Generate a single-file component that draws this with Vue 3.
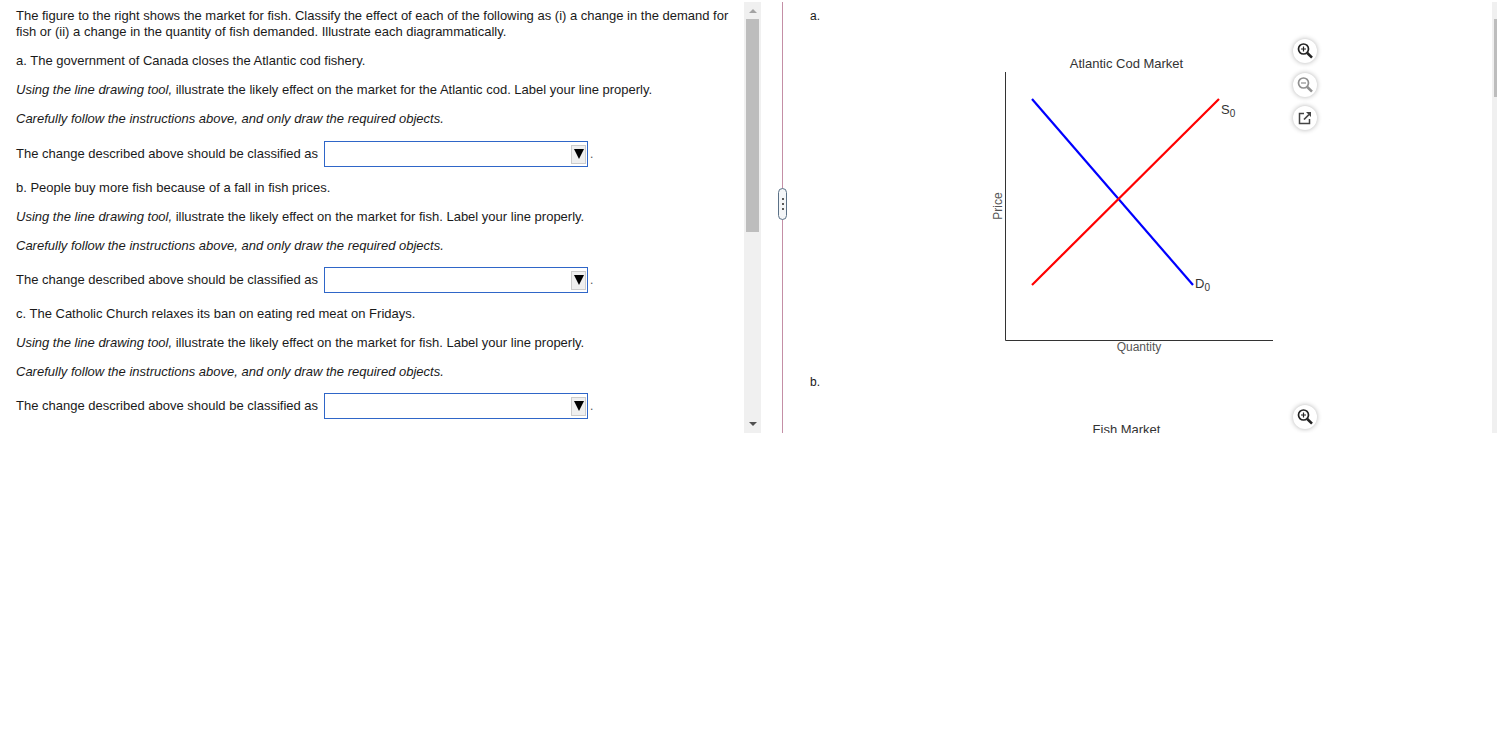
<template>
  <div class="player">
    <section class="questions">
      <div class="questions__body">
        <p class="intro">
          The figure to the right shows the market for fish. Classify the effect of each of the following as (i) a change in the demand for<br />
          fish or (ii) a change in the quantity of fish demanded. Illustrate each diagrammatically.
        </p>
        <div v-for="q in questions" :key="q.text" class="question">
          <p>{{ q.text }}</p>
          <p><em>Using the line drawing tool,</em> illustrate the likely effect on the market for {{ q.market }}. Label your line properly.</p>
          <p><em>Carefully follow the instructions above, and only draw the required objects.</em></p>
          <div class="answer">
            <span>The change described above should be classified as</span>
            <div class="dropdown">
              <span class="dropdown__btn"><i></i></span>
            </div>
            <span class="answer__dot">.</span>
          </div>
        </div>
      </div>
      <div class="scrollbar">
        <span class="arrow arrow--up"></span>
        <span class="scrollbar__thumb"></span>
        <span class="scrollbar__gap"></span>
        <span class="arrow arrow--down"></span>
      </div>
    </section>

    <div class="divider">
      <span class="divider__handle"><i></i><i></i><i></i></span>
    </div>

    <section class="figures">
      <div class="figures__body">
        <div v-for="chart in charts" :key="chart.label" class="figure">
          <div class="figure__label">{{ chart.label }}</div>
          <svg class="graph" width="300" height="366" viewBox="0 0 300 366">
            <text x="136.500" y="66" text-anchor="middle" class="graph__title">{{ chart.title }}</text>
            <template v-if="chart.lines">
              <path d="M15.5 70V338.500H283" fill="none" stroke="#333" stroke-width="1" />
              <text x="149" y="349" text-anchor="middle" class="graph__axis">Quantity</text>
              <text transform="translate(12 204) rotate(-90)" text-anchor="middle" class="graph__axis">Price</text>
              <line x1="42" y1="97" x2="203" y2="283" stroke="#0000ff" stroke-width="2.2" />
              <line x1="42" y1="283" x2="229" y2="97" stroke="#ff0000" stroke-width="2.2" />
              <text x="231" y="112" class="graph__curve">S<tspan class="graph__sub" dy="3">0</tspan></text>
              <text x="205" y="286" class="graph__curve">D<tspan class="graph__sub" dy="3">0</tspan></text>
            </template>
          </svg>
          <div class="tools">
            <button class="tool">
              <svg width="20" height="20" viewBox="0 0 20 20" fill="none" stroke="#222">
                <circle cx="8.500" cy="8" r="5" stroke-width="1.700" />
                <path d="M12.300 12L17 16.700" stroke-width="2.600" />
                <path d="M6 8h5M8.500 5.500v5" stroke-width="1.200" />
              </svg>
            </button>
            <button v-if="chart.lines" class="tool">
              <svg width="20" height="20" viewBox="0 0 20 20" fill="none" stroke="#8f8f8f">
                <circle cx="8.500" cy="8" r="5" stroke-width="1.700" />
                <path d="M12.300 12L17 16.700" stroke-width="2.600" />
                <path d="M6 8h5" stroke-width="1.200" />
              </svg>
            </button>
            <button v-if="chart.lines" class="tool">
              <svg width="20" height="20" viewBox="0 0 20 20" fill="none" stroke="#444">
                <path d="M9 5.500H4.500V15.500H14.500V11" stroke-width="1.500" />
                <path d="M9 11.500L14 6.500" stroke-width="1.700" />
                <path d="M11 4h5v5z" fill="#444" stroke="none" />
              </svg>
            </button>
          </div>
        </div>
      </div>
      <div class="page-scroll"><span></span></div>
    </section>
  </div>
</template>

<script setup>
const questions = [
  { text: 'a. The government of Canada closes the Atlantic cod fishery.', market: 'the Atlantic cod' },
  { text: 'b. People buy more fish because of a fall in fish prices.', market: 'fish' },
  { text: 'c. The Catholic Church relaxes its ban on eating red meat on Fridays.', market: 'fish' }
]

const charts = [
  { label: 'a.', title: 'Atlantic Cod Market', lines: true },
  { label: 'b.', title: 'Fish Market', lines: false }
]
</script>

<style>
html,
body {
  background: #fff;
}
</style>

<style scoped>
.player {
  display: flex;
  height: 431px;
  margin-top: 2px;
  overflow: hidden;
  font-family: 'Liberation Sans', Arial, sans-serif;
  font-size: 13px;
  line-height: 16px;
  color: #1a1a1a;
}

p {
  margin: 0 0 13px;
}

.questions {
  display: flex;
  flex: 0 0 761px;
}

.questions__body {
  width: 744px;
  padding: 6px 0 0 16px;
  box-sizing: border-box;
  overflow: hidden;
}

.intro {
  white-space: nowrap;
}

.question p + p + p {
  margin-bottom: 0;
}

.answer {
  display: flex;
  align-items: center;
  height: 26px;
  margin: 14px 0 13px;
}

.question + .question .answer {
  margin-top: 13px;
}

.dropdown {
  display: flex;
  align-items: center;
  justify-content: flex-end;
  width: 264px;
  height: 26px;
  margin-left: 6px;
  padding-right: 1px;
  box-sizing: border-box;
  background: #fff;
  border: 1px solid #2f66c8;
}

.dropdown__btn {
  display: flex;
  align-items: center;
  justify-content: center;
  width: 15px;
  height: 19px;
  background: #efefef;
  border: 1px solid #ccc;
  box-sizing: border-box;
}

.dropdown__btn i {
  border-left: 5px solid transparent;
  border-right: 5px solid transparent;
  border-top: 10px solid #000;
}

.answer__dot {
  margin-left: 2px;
  font-size: 12px;
  color: #555;
  line-height: 26px;
}

.scrollbar {
  display: flex;
  flex-direction: column;
  align-items: center;
  width: 17px;
  background: #f0f0f0;
}

.arrow {
  flex: none;
  width: 0;
  height: 0;
  border-left: 4px solid transparent;
  border-right: 4px solid transparent;
}

.arrow--up {
  margin: 7px 0 6px;
  border-bottom: 4px solid #a3a3a3;
}

.arrow--down {
  margin: 6px 0 7px;
  border-top: 4px solid #505050;
}

.scrollbar__thumb {
  flex: none;
  width: 13px;
  height: 213px;
  background: #bdbdbd;
}

.scrollbar__gap {
  flex: 1;
}

.divider {
  position: relative;
  flex: none;
  width: 1px;
  margin-left: 21px;
  background: #c48fa6;
}

.divider__handle {
  position: absolute;
  top: 186px;
  left: -4px;
  display: flex;
  flex-direction: column;
  align-items: center;
  justify-content: center;
  gap: 3px;
  width: 9px;
  height: 32px;
  box-sizing: border-box;
  background: #f4f6f8;
  border: 1px solid #5b7187;
  border-radius: 5px;
}

.divider__handle i {
  width: 2px;
  height: 2px;
  background: #5b5b5b;
}

.figures {
  display: flex;
  flex: 1;
  min-width: 0;
}

.figures__body {
  flex: 1;
  min-width: 0;
  overflow: hidden;
}

.figure {
  display: flex;
  height: 366px;
}

.figure__label {
  width: 207px;
  padding: 6px 0 0 27px;
  box-sizing: border-box;
  font-size: 12px;
}

.graph {
  flex: none;
  overflow: hidden;
}

.graph__title {
  font-size: 13px;
  fill: #333;
}

.graph__axis {
  font-size: 12px;
  fill: #555;
}

.graph__curve {
  font-size: 13px;
  fill: #333;
}

.graph__sub {
  font-size: 10px;
}

.tools {
  display: flex;
  flex-direction: column;
  gap: 9.5px;
  margin-left: 3px;
  padding-top: 37px;
}

.tool {
  display: flex;
  align-items: center;
  justify-content: center;
  width: 24px;
  height: 24px;
  padding: 0;
  background: #fff;
  border: none;
  border-radius: 50%;
  box-shadow: 0 0 5px rgba(0, 0, 0, 0.3);
}

.page-scroll {
  flex: none;
  width: 5px;
  background: #f0f0f0;
}

.page-scroll span {
  display: block;
  width: 3px;
  height: 78px;
  margin: 17px 0 0 2px;
  background: #bdbdbd;
}
</style>
